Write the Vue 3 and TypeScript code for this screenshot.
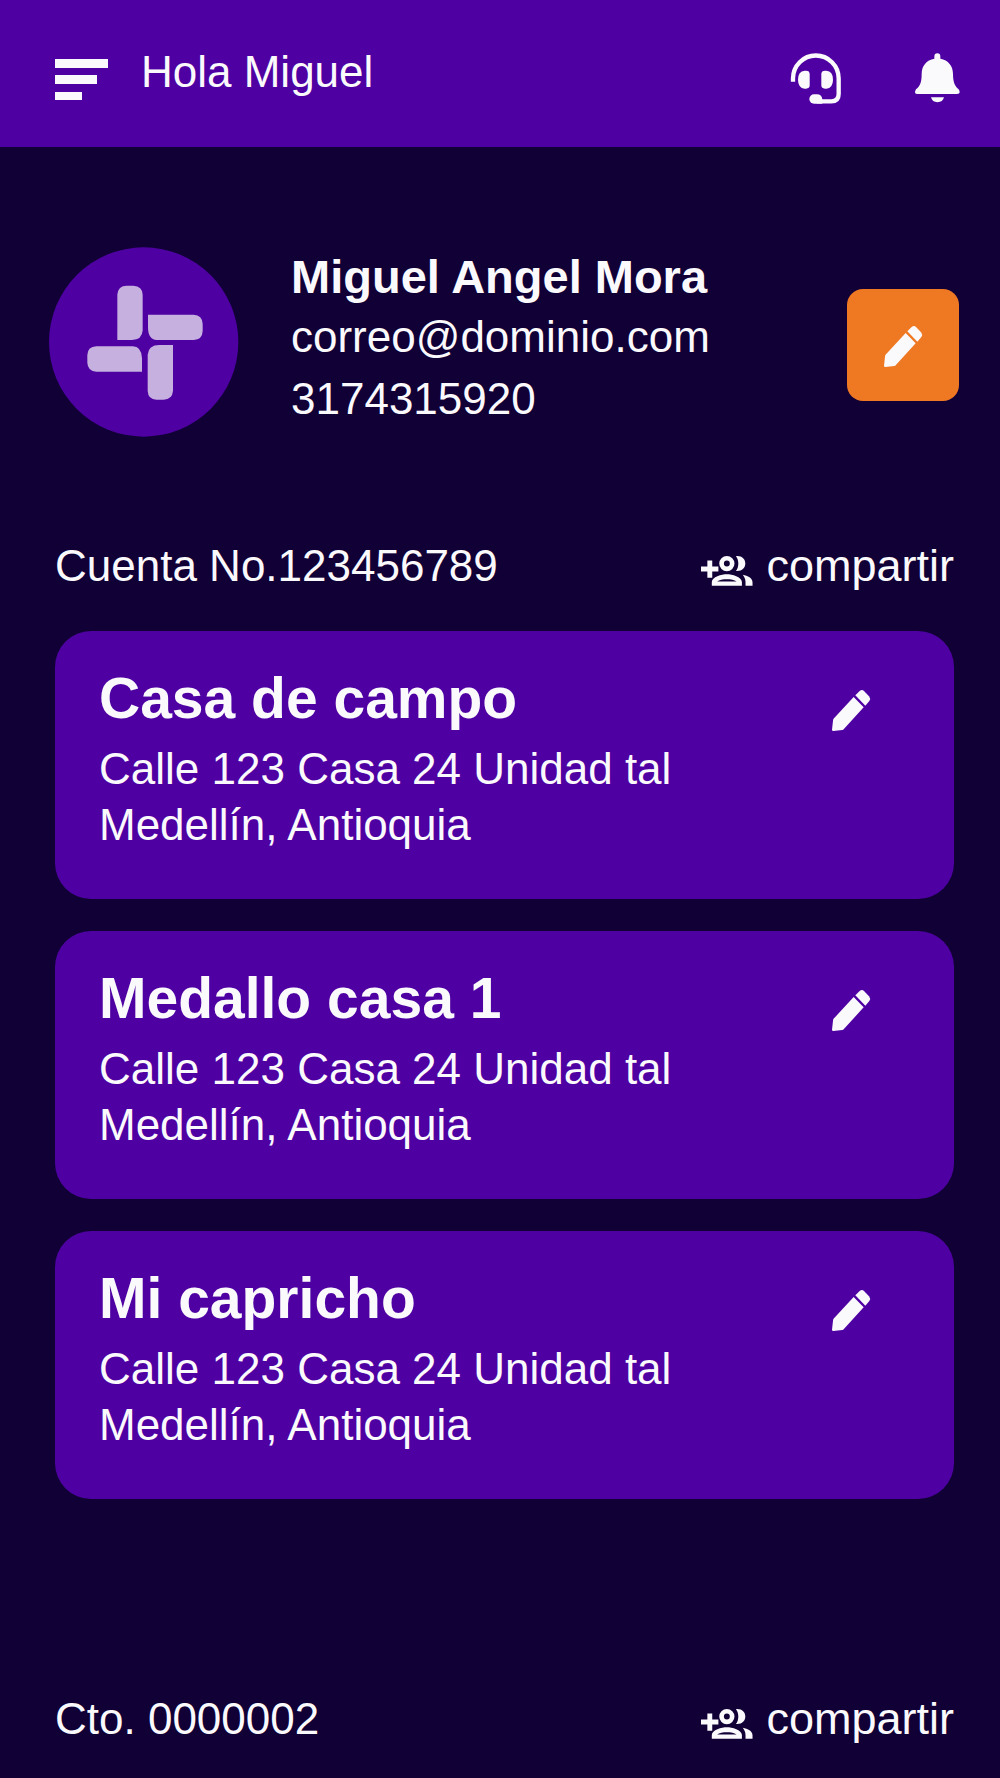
<script setup lang="ts">
interface Place {
  name: string
  address: string
  city: string
}

interface Account {
  label: string
  places: Place[]
}

const user = {
  firstName: 'Miguel',
  fullName: 'Miguel Angel Mora',
  email: 'correo@dominio.com',
  phone: '3174315920',
}

const address = 'Calle 123 Casa 24 Unidad tal'
const city = 'Medellín, Antioquia'

const accounts: Account[] = [
  {
    label: 'Cuenta No.123456789',
    places: [
      { name: 'Casa de campo', address, city },
      { name: 'Medallo casa 1', address, city },
      { name: 'Mi capricho', address, city },
    ],
  },
  { label: 'Cto. 0000002', places: [] },
]
</script>

<template>
  <div class="page">
    <header class="topbar">
      <button class="icon-button" type="button" aria-label="Menú">
        <svg class="menu-icon" viewBox="0 0 54 42" aria-hidden="true">
          <path d="M0 0h53v9H0zM0 16h42v9H0zM0 33h27v8H0z" />
        </svg>
      </button>
      <p class="greeting">Hola {{ user.firstName }}</p>
      <div class="actions">
        <button class="icon-button" type="button" aria-label="Soporte">
          <svg class="headset-icon" viewBox="60 67 156 156" aria-hidden="true">
            <path
              d="M69 153V143A68 68 0 0 1 206 143V190Q206 212 184 212H140"
              fill="none"
              stroke="currentColor"
              stroke-width="13"
            />
            <path d="M104 120H108Q119 120 119 130V164Q119 174 108 174H104Q84 172 84 147Q84 122 104 120Z" />
            <path d="M169 120H165Q154 120 154 130V164Q154 174 165 174H169Q189 172 189 147Q189 122 169 120Z" />
            <path d="M132 191H141Q155 191 157 206V219H132A14 14 0 0 1 132 191Z" />
          </svg>
        </button>
        <button class="icon-button" type="button" aria-label="Notificaciones">
          <svg class="bell-icon" viewBox="435 68 135 156" aria-hidden="true">
            <path
              d="M502 69Q511 69 511 79V85C535 89 549 107 549 130C549 158 556 168 566 177Q574 191 561 191H443Q430 191 438 177C449 168 455 158 455 130C455 107 469 89 493 85V79Q493 69 502 69Z"
            />
            <path d="M483 201H522A20 19 0 0 1 483 201Z" />
          </svg>
        </button>
      </div>
    </header>

    <main>
      <section class="profile">
        <svg class="avatar" viewBox="57 52 570 570" role="img" aria-label="Avatar">
          <circle class="avatar-disc" cx="341" cy="337" r="284" />
          <g class="avatar-mark">
            <path d="M262 331V195Q264 168 290 168H310Q337 169 338 195V302Q336 331 306 331Z" />
            <path d="M354 255H491Q517 257 518 282V304Q517 330 491 331H380Q354 330 354 292Z" />
            <path d="M336 426H199Q173 424 172 399V376Q173 351 199 350H308Q335 351 336 386Z" />
            <path d="M429 346V483Q427 509 401 510H379Q354 509 353 483V375Q355 346 388 346Z" />
          </g>
        </svg>
        <div class="profile-text">
          <h1 class="profile-name">{{ user.fullName }}</h1>
          <p>{{ user.email }}</p>
          <p>{{ user.phone }}</p>
        </div>
        <button class="edit-profile" type="button" aria-label="Editar perfil">
          <svg class="pencil-icon" viewBox="153 80 120 132" aria-hidden="true">
            <path d="M221 110L251 141L191 207Q190 209 187 209L160 212Q156 212 156 208L159 181Q159 177 162 174Z" />
            <path d="M226 105L239 92Q246 86 252 92L267 108Q273 115 268 122L256 136Z" />
          </svg>
        </button>
      </section>

      <section v-for="account in accounts" :key="account.label" class="account">
        <div class="account-head">
          <h2 class="account-label">{{ account.label }}</h2>
          <button class="share" type="button">
            <svg class="share-icon" viewBox="0 4 25 16" aria-hidden="true">
              <path d="M3 7h2.300v2.900h2.900v2.300H5.300v3H3v-3H0V9.900h3z" />
              <path
                fill-rule="evenodd"
                d="M12.200 13.500c-2.400 0-7.100 1.200-7.100 3.700V19h14.200v-1.800c0-2.500-4.700-3.700-7.100-3.700zM7.600 16.900c1-.7 2.800-1 4.600-1s3.600.3 4.600 1zM12.200 12.100a3.600 3.600 0 1 0 0-7.200 3.600 3.600 0 0 0 0 7.200zm0-5a1.400 1.400 0 1 1 0 2.800 1.400 1.400 0 0 1 0-2.800z"
              />
              <path d="M16.500 5c2.700-.3 4.400 1.400 4.400 3.500s-1.700 3.800-4.400 3.500c.8-1 1.100-2.200 1.100-3.500s-.3-2.500-1.100-3.500z" />
              <path d="M19.700 13.800c2.400.5 4.600 1.600 4.600 3.500V19H21v-1.700c0-1.400-.5-2.500-1.300-3.500z" />
            </svg>
            <span>compartir</span>
          </button>
        </div>
        <ul v-if="account.places.length" class="places">
          <li v-for="place in account.places" :key="place.name" class="card">
            <div class="card-text">
              <h3 class="card-title">{{ place.name }}</h3>
              <p>{{ place.address }}</p>
              <p>{{ place.city }}</p>
            </div>
            <button class="icon-button edit-place" type="button" :aria-label="`Editar ${place.name}`">
              <svg class="pencil-icon" viewBox="153 86 120 132" aria-hidden="true">
                <path d="M221 110L251 141L191 207Q190 209 187 209L160 212Q156 212 156 208L159 181Q159 177 162 174Z" />
                <path d="M226 105L239 92Q246 86 252 92L267 108Q273 115 268 122L256 136Z" />
              </svg>
            </button>
          </li>
        </ul>
      </section>
    </main>
  </div>
</template>

<style>
body {
  margin: 0;
  background: #110036;
}
</style>

<style scoped>
.page {
  min-height: 100vh;
  box-sizing: border-box;
  padding-bottom: 31px;
  background: #110036;
  color: #faf9fc;
  font-family: "Liberation Sans", Arial, Helvetica, sans-serif;
  font-size: 44px;
  line-height: 56px;
}

h1,
h2,
h3,
p,
ul {
  margin: 0;
  padding: 0;
}

svg {
  display: block;
  flex-shrink: 0;
  fill: currentColor;
}

button {
  border: 0;
  padding: 0;
  background: none;
  color: inherit;
  font: inherit;
  cursor: pointer;
}

.topbar {
  display: flex;
  align-items: center;
  padding: 44px 40px 31px 55px;
  background: #4e00a2;
}

.greeting {
  flex: 1;
  height: 72px;
  margin-left: 32px;
}

.actions {
  display: flex;
  gap: 73px;
  margin-bottom: 2px;
}

.menu-icon {
  width: 54px;
  height: 42px;
}

.headset-icon {
  width: 52px;
  height: 52px;
}

.bell-icon {
  width: 45px;
  height: 52px;
}

.profile {
  display: flex;
  align-items: flex-start;
  padding: 100px 41px 0 49px;
}

.avatar {
  width: 190px;
  height: 190px;
}

.avatar-disc {
  fill: #4e00a2;
}

.avatar-mark {
  fill: #c5b0df;
}

.profile-text {
  flex: 1;
  margin-left: 52px;
  line-height: 62px;
}

.profile-name {
  font-size: 47px;
  font-weight: 700;
  line-height: 59px;
}

.edit-profile {
  display: flex;
  align-items: center;
  justify-content: center;
  align-self: flex-end;
  width: 112px;
  height: 112px;
  margin-bottom: 36px;
  border-radius: 16px;
  background: #ef7823;
}

.pencil-icon {
  width: 40px;
  height: 44px;
}

.account {
  padding: 101px 46px 0 55px;
}

.account + .account {
  padding-top: 192px;
}

.account-head {
  display: flex;
  align-items: center;
  justify-content: space-between;
}

.account-label {
  font-size: 44px;
  font-weight: 400;
}

.share {
  display: flex;
  align-items: flex-end;
  gap: 12px;
  font-size: 45px;
}

.share-icon {
  width: 53px;
  height: 34px;
  margin-bottom: 6px;
}

.places {
  display: flex;
  flex-direction: column;
  gap: 32px;
  margin-top: 37px;
  list-style: none;
}

.card {
  display: flex;
  align-items: flex-start;
  justify-content: space-between;
  padding: 32px 83px 46px 44px;
  border-radius: 36px;
  background: #4e00a2;
}

.card-title {
  margin-bottom: 8px;
  font-size: 57px;
  font-weight: 700;
  line-height: 70px;
}

.edit-place {
  margin-top: 26px;
}
</style>
